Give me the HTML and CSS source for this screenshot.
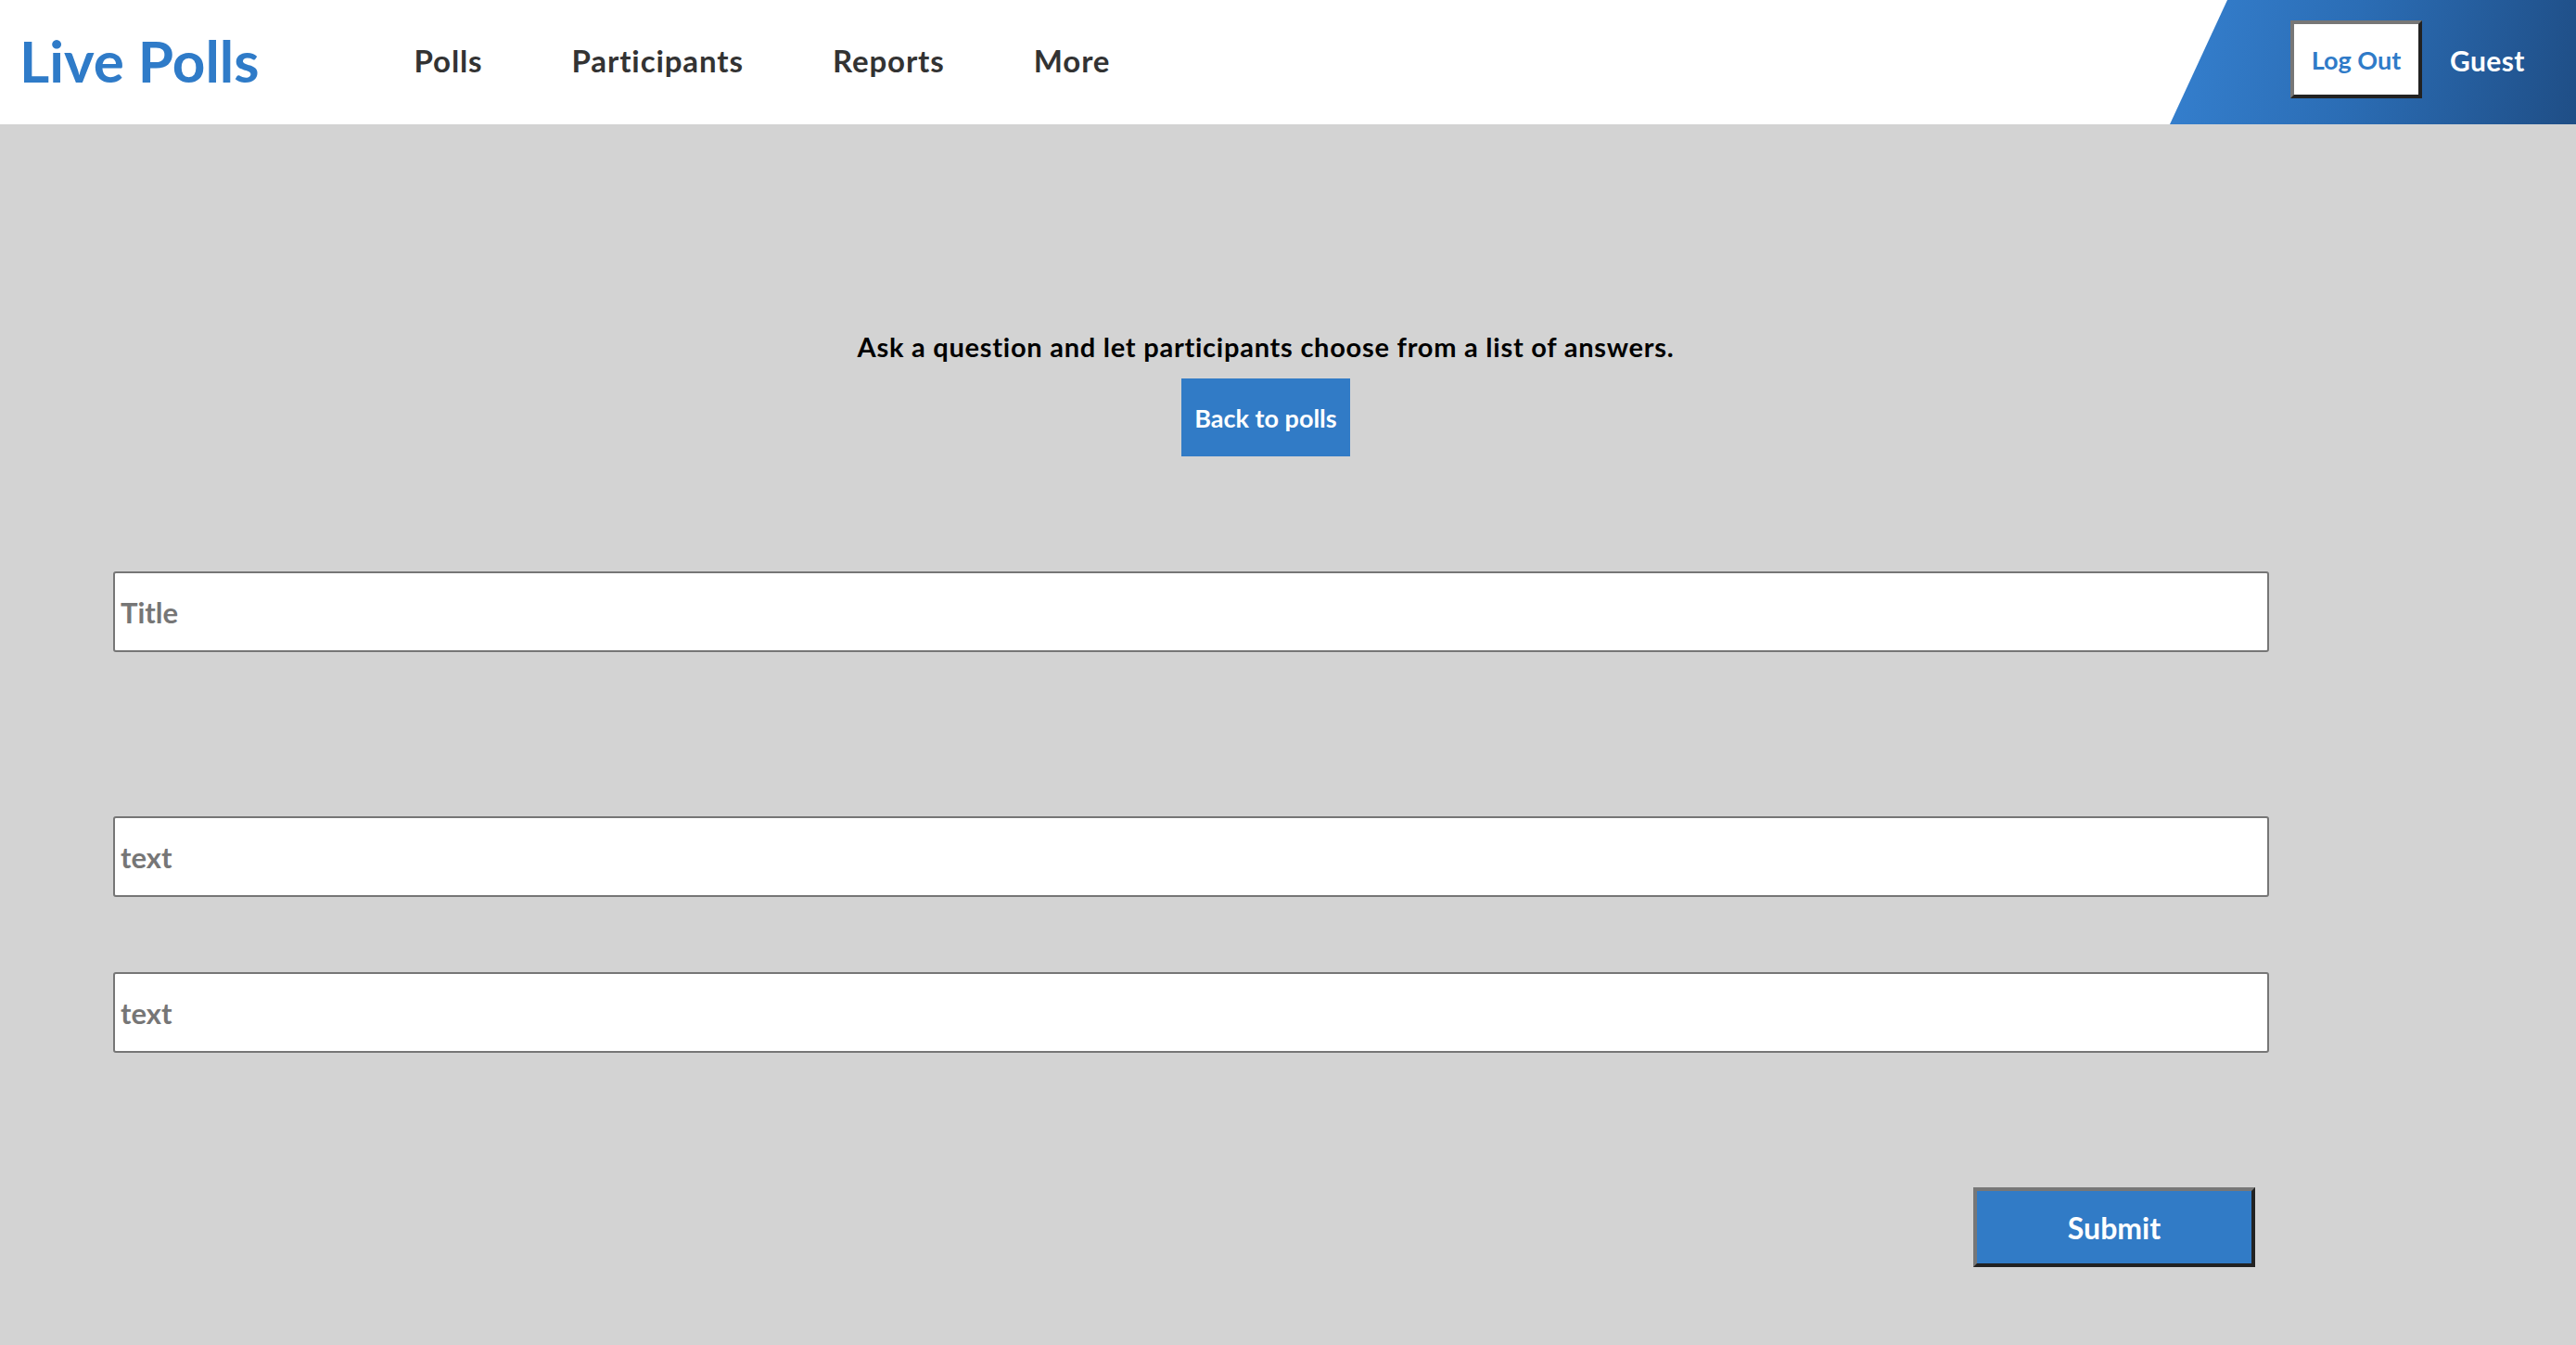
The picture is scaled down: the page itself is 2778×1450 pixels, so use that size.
FILE: index.html
```html
<!DOCTYPE html>
<html lang="en">
<head>
<meta charset="utf-8">
<title>Live Polls</title>
<link rel="stylesheet" href="styles.css">
</head>
<body>
<header class="topbar">
  <a class="logo" href="#">Live Polls</a>
  <nav class="nav">
    <a class="nav-link" href="#">Polls</a>
    <a class="nav-link" href="#">Participants</a>
    <a class="nav-link" href="#">Reports</a>
    <a class="nav-link" href="#">More</a>
  </nav>
  <div class="user">
    <button class="logout" type="button">Log Out</button>
    <span class="guest">Guest</span>
  </div>
</header>
<main class="main">
  <section class="intro">
    <p class="lead">Ask a question and let participants choose from a list of answers.</p>
    <a class="back" href="#">Back to polls</a>
  </section>
  <form class="form">
    <input class="field field-title" type="text" placeholder="Title">
    <input class="field" type="text" placeholder="text">
    <input class="field field-gap" type="text" placeholder="text">
    <div class="actions">
      <button class="submit" type="button">Submit</button>
    </div>
  </form>
</main>
</body>
</html>
```

FILE: styles.css
```css
* { box-sizing: border-box; }
html, body { margin: 0; padding: 0; }
body {
  font-family: Lato, "Noto Sans", sans-serif;
  background: #d3d3d3;
  min-height: 1450px;
}
.topbar {
  display: flex;
  align-items: center;
  height: 134px;
  background: #ffffff;
}
.logo {
  margin-left: 21px;
  margin-top: -5px;
  font-size: 62px;
  font-weight: 700;
  color: #2f7bc8;
  text-decoration: none;
  line-height: 1;
}
.nav {
  display: flex;
  margin-left: 119px;
  margin-top: -4px;
  align-items: center;
}
.nav-link {
  padding: 0 48px;
  font-size: 33px;
  font-weight: 700;
  letter-spacing: 0.9px;
  color: #333333;
  text-decoration: none;
}
.user {
  margin-left: auto;
  width: 438px;
  height: 100%;
  display: flex;
  align-items: center;
  padding-left: 130px;
  background: linear-gradient(100deg, #3580cf 0%, #2b6db5 45%, #1f4e86 100%);
  clip-path: polygon(62px 0, 100% 0, 100% 100%, 0 100%);
}
.logout {
  width: 142px;
  height: 84px;
  margin-top: -6px;
  background: #ffffff;
  border: 4px solid #777;
  border-right-color: #222;
  border-bottom-color: #222;
  font-family: inherit;
  font-size: 27px;
  font-weight: 700;
  color: #2f7bc8;
  padding: 0;
  cursor: pointer;
}
.guest {
  margin-left: 30px;
  margin-top: -4px;
  font-size: 30px;
  font-weight: 700;
  letter-spacing: 0.4px;
  color: #ffffff;
}
.main {
  padding-top: 222px;
}
.intro {
  display: flex;
  flex-direction: column;
  align-items: center;
  padding-right: 48px;
}
.lead {
  margin: 0;
  font-size: 29px;
  font-weight: 700;
  letter-spacing: 0.75px;
  color: #000;
  line-height: 36px;
}
.back {
  margin-top: 16px;
  width: 182px;
  height: 84px;
  display: flex;
  align-items: center;
  justify-content: center;
  background: #317bc6;
  color: #fff;
  font-size: 27px;
  font-weight: 700;
  text-decoration: none;
}
.form {
  display: flex;
  flex-direction: column;
  margin: 124px 0 0 122px;
  width: 2325px;
}
.field {
  height: 87px;
  border: 2px solid #767676;
  border-radius: 3px;
  background: #fff;
  padding: 0 6px;
  font-family: inherit;
  font-size: 31px;
  font-weight: 700;
  color: #333;
}
.field::placeholder { color: #767676; opacity: 1; }
.field-title { margin-bottom: 177px; }
.field + .field { margin-bottom: 81px; }
.field.field-gap { margin-bottom: 0; }
.actions {
  display: flex;
  justify-content: flex-end;
  padding-right: 15px;
  margin-top: 145px;
}
.submit {
  width: 304px;
  height: 86px;
  background: #317bc6;
  border: 4px solid #777;
  border-right-color: #222;
  border-bottom-color: #222;
  font-family: inherit;
  font-size: 32px;
  font-weight: 700;
  color: #fff;
  padding: 0;
}
```
